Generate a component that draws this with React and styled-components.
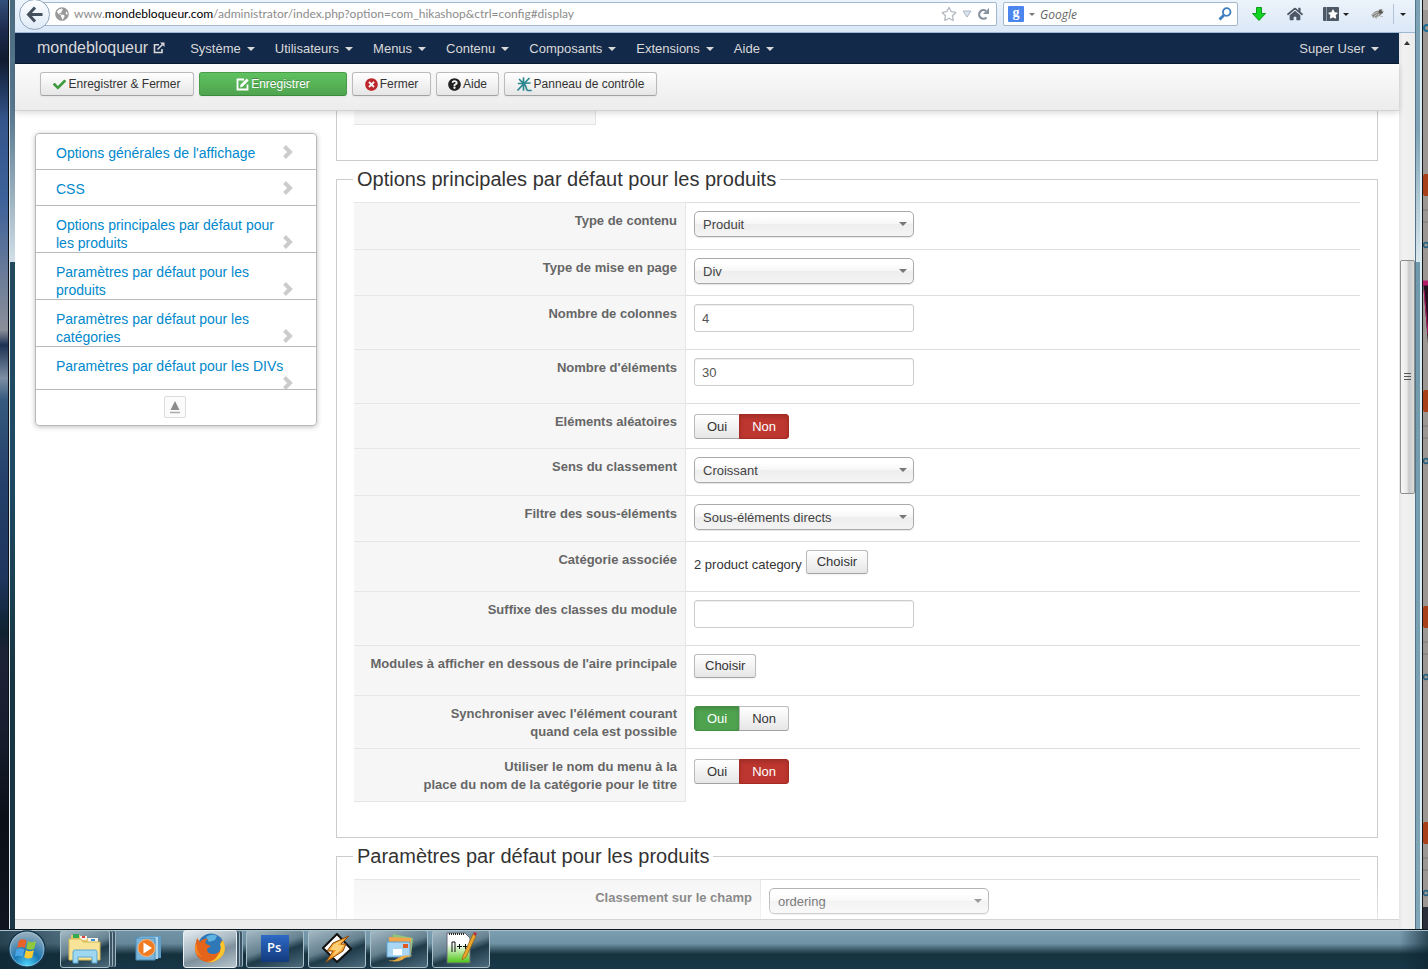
import React, { useState } from 'react';
import styled, { createGlobalStyle, css } from 'styled-components';
import { FaCheck, FaTimesCircle, FaQuestionCircle, FaHome, FaRegStar, FaStar, FaGlobeAmericas } from 'react-icons/fa';

const GlobalStyle = createGlobalStyle`
    * {
        box-sizing: border-box;
    }
    body {
        margin: 0;
        font-family: "Liberation Sans", Arial, sans-serif;
        font-size: 13px;
        line-height: 18px;
        color: #333;
        overflow: hidden;
    }
    button, input, select {
        font-family: inherit;
        font-size: 13px;
    }
    a {
        text-decoration: none;
    }
`;

/* ---------- desktop and window ---------- */

const Desktop = styled.div`
    display: flex;
    flex-direction: column;
    height: 100vh;
    background: #0f2430;
`;

const Screen = styled.div`
    display: flex;
    flex: 1;
    min-height: 0;
`;

const Wallpaper = styled.div`
    width: 8px;
    background: linear-gradient(#34507c 0, #1d2a4c 30px, #101b30 60px, #34558c 120px, #3d619a 200px, #8b8f98 330px, #1c3154 345px, #7d8fa3 378px, #35597f 400px, #24406b 480px, #1f355c 580px, #0e2230 632px, #1c2236 650px, #181d2e 730px, #0a0f18 820px, #10141e);
`;

const LeftFrame = styled.div`
    width: 7px;
    border-left: 1px solid #0a1218;
    background: linear-gradient(90deg, #dfe9ee 0 1px, transparent 1px),
        linear-gradient(#49697f 0, #5c7c92 120px, #d2dfe7 262px, #23495e 262px, #1f4a66 460px, #1a3f50 600px, #173442 680px, #1b3746);
`;

const RightFrame = styled.div`
    width: 8px;
    border-right: 1px solid #10181c;
    background: linear-gradient(90deg, #4f7586 0 1px, transparent 1px 5px, #dcebf1 5px 7px),
        linear-gradient(#7ba2b4 0, #7da4b6 130px, #dbe8ee 262px, #6f99ac 262px, #7fa6b7);
`;

const BackWindow = styled.div`
    width: 5px;
    overflow: hidden;
    background: #9c9793;
`;

const Browser = styled.div`
    display: flex;
    flex-direction: column;
    flex: 1;
    min-width: 0;
    background: white;
`;

/* ---------- browser bar ---------- */

const NavBar = styled.div`
    display: flex;
    align-items: center;
    height: 33px;
    padding: 0 9px 4px 4px;
    border-bottom: 1px solid #9db8d4;
    background: linear-gradient(#ecf3fb, #dbe8f7);
    font-family: "Open Sans", "Noto Sans", sans-serif;
    font-size: 12px;
`;

const BackButton = styled.button`
    display: flex;
    align-items: center;
    justify-content: center;
    flex: none;
    width: 31px;
    height: 31px;
    padding: 0;
    border: 1px solid #8fa6bd;
    border-radius: 50%;
    background: linear-gradient(#fdfeff, #dfeaf6);
    z-index: 1;
`;

const UrlBar = styled.div`
    display: flex;
    align-items: center;
    flex: 1;
    gap: 5px;
    height: 24px;
    margin-left: -8px;
    padding: 0 6px 0 12px;
    border: 1px solid #a3b8cc;
    border-radius: 2px;
    background: white;
    color: #8c8c8c;
`;

const Url = styled.div`
    flex: 1;
    font-family: Lato, "Open Sans", sans-serif;
    white-space: nowrap;
    strong {
        font-weight: 400;
        color: #000;
    }
`;

const SearchBar = styled(UrlBar)`
    flex: none;
    width: 235px;
    margin: 0 0 0 6px;
    padding: 0 5px 0 4px;
`;

const GoogleMark = styled.span`
    width: 16px;
    height: 16px;
    border-radius: 1px;
    background: #4a86ee;
    color: white;
    font: 700 14px/13px "Liberation Serif", serif;
    text-align: center;
`;

const SearchInput = styled.input`
    flex: 1;
    min-width: 0;
    padding: 0;
    border: none;
    outline: none;
    font-size: 12px;
    font-style: italic;
    background: none;
    &::placeholder {
        color: #666;
    }
`;

const BarIcon = styled.button`
    display: flex;
    align-items: center;
    gap: 4px;
    margin-left: ${(props) => props.$gap || 0}px;
    padding: 0;
    border: none;
    background: none;
    color: #4d5866;
`;

const BarSplit = styled.span`
    width: 1px;
    height: 20px;
    margin: 0 6px 0 7px;
    background: #b4c4d6;
`;

const Caret = styled.span`
    display: inline-block;
    border-top: 4px solid ${(props) => props.$color || '#d9d9d9'};
    border-left: 4px solid transparent;
    border-right: 4px solid transparent;
`;

const SmallCaret = styled(Caret)`
    border-width: 3px 3px 0;
`;

/* ---------- scroll bar ---------- */

const Viewport = styled.div`
    display: flex;
    flex: 1;
    min-height: 0;
`;

const ScrollTrack = styled.div`
    display: flex;
    flex-direction: column;
    align-items: center;
    width: 16px;
    padding-top: 8px;
    background: linear-gradient(90deg, #e6e6e6, #f1f1f1 4px, #ececec);
`;

const ScrollThumb = styled.div`
    display: flex;
    align-items: center;
    justify-content: center;
    width: 15px;
    height: 234px;
    margin-top: 215px;
    border: 1px solid #8f8f8f;
    border-radius: 2px;
    background: linear-gradient(90deg, #f7f7f7, #e9e9e9 45%, #c9c9cb 60%, #dcdcdc);
`;

/* ---------- admin page ---------- */

const Page = styled.div`
    display: flex;
    flex-direction: column;
    flex: 1;
    min-width: 0;
`;

const AdminBar = styled.nav`
    display: flex;
    align-items: center;
    height: 31px;
    padding: 0 10px 0 22px;
    border-bottom: 1px solid #0a1a33;
    background: #13294a;
`;

const Brand = styled.a`
    display: flex;
    align-items: center;
    gap: 5px;
    margin-right: 15px;
    color: #d9d9d9;
    font-size: 16px;
`;

const MenuLink = styled.a`
    display: flex;
    align-items: center;
    gap: 6px;
    padding: 1px 10px 0;
    color: #d9d9d9;
    &:last-child {
        margin-left: auto;
    }
`;

const Toolbar = styled.div`
    display: flex;
    gap: 5px;
    height: 47px;
    padding: 8px 25px;
    border-bottom: 1px solid #d2d2d2;
    background: linear-gradient(#fbfbfb, #ececec);
    box-shadow: 0 2px 6px rgba(0, 0, 0, 0.15);
    z-index: 1;
`;

const Button = styled.button`
    height: 24px;
    padding: 0 10px;
    border: 1px solid #bbb;
    border-bottom-color: #a2a2a2;
    border-radius: 3px;
    background: linear-gradient(#fff, #e6e6e6);
    box-shadow: 0 1px 2px rgba(0, 0, 0, 0.05);
    color: #333;
    line-height: 18px;
    cursor: pointer;
`;

const ToolButton = styled(Button)`
    display: flex;
    align-items: center;
    justify-content: center;
    gap: 2px;
    min-width: ${(props) => props.$width}px;
    padding: 0 8px;
    font-size: 12px;
    white-space: nowrap;
    ${(props) => props.$green && css`
        border-color: #4a9c4a #4a9c4a #3c8a3c;
        background: linear-gradient(#5fc15f, #4fa44f);
        color: white;
        text-shadow: 0 -1px 0 rgba(0, 0, 0, 0.25);
    `}
`;

const Content = styled.div`
    display: flex;
    align-items: flex-start;
    flex: 1;
    min-height: 0;
    gap: 19px;
    padding: 0 21px 0 20px;
    overflow: hidden;
    position: relative;
    &::after {
        content: "";
        position: absolute;
        left: 0;
        right: 0;
        bottom: 0;
        height: 40px;
        background: linear-gradient(rgba(255, 255, 255, 0), rgba(255, 255, 255, 0.5));
        pointer-events: none;
    }
`;

const StatusBar = styled.div`
    height: 10px;
    border-top: 1px solid #d4d4d4;
    background: #ececec;
`;

/* ---------- side menu ---------- */

const SideMenu = styled.ul`
    flex: none;
    width: 282px;
    margin: 22px 0 0;
    padding: 0;
    list-style: none;
    border: 1px solid #b9b9b9;
    border-radius: 4px;
    box-shadow: 0 1px 5px rgba(0, 0, 0, 0.25);
    font-size: 14px;
`;

const SideItem = styled.li`
    display: flow-root;
    min-height: 36px;
    max-height: ${(props) => (props.$short ? '43px' : 'none')};
    padding: 10px 22px 0 20px;
    border-bottom: 1px solid #b9b9b9;
    overflow: hidden;
    a {
        color: #08c;
    }
    svg {
        float: right;
        margin-top: 1px;
    }
`;

const SideTop = styled.li`
    display: flex;
    justify-content: center;
    padding: 6px 2px 7px 0;
`;

const TopButton = styled.button`
    display: flex;
    align-items: center;
    justify-content: center;
    width: 22px;
    height: 22px;
    padding: 0;
    border: 1px solid #ddd;
    border-radius: 2px;
    background: #fbfbfb;
`;

/* ---------- option sheets ---------- */

const Sheets = styled.div`
    flex: 1;
    min-width: 0;
`;

const Sheet = styled.fieldset`
    min-width: 0;
    margin: 0;
    padding: ${(props) => (props.$cut ? '0' : '5px')} 17px 35px;
    border: 1px solid #ccc;
    border-top-width: ${(props) => (props.$cut ? '0' : '1px')};
`;

const Legend = styled.legend`
    padding: 0 4px;
    margin-left: -1px;
    font-size: 20px;
    line-height: 36px;
`;

const CutCell = styled.div`
    width: 242px;
    height: 14px;
    border: solid #e4e4e4;
    border-width: 0 1px 1px 0;
    background: #f6f6f6;
`;

const OptionTable = styled.table`
    width: 100%;
    border-collapse: separate;
    border-spacing: 0;
`;

const OptionRow = styled.tr`
    height: ${(props) => props.$height}px;
`;

const KeyCell = styled.th`
    width: ${(props) => props.$width}px;
    padding: 9px 8px 0;
    border-top: 1px solid #e6e6e6;
    border-right: 1px solid #e6e6e6;
    background: #f6f6f6;
    color: #666;
    font-weight: bold;
    text-align: right;
    vertical-align: top;
    white-space: pre-line;
    tr:last-child > & {
        border-bottom: 1px solid #e6e6e6;
    }
`;

const ValueCell = styled.td`
    padding: 8px 8px 0;
    border-top: 1px solid #ddd;
    vertical-align: top;
`;

const SelectWrap = styled.div`
    position: relative;
    width: 220px;
    ${Caret} {
        position: absolute;
        top: 11px;
        right: 7px;
        pointer-events: none;
    }
`;

const Select = styled.select`
    display: block;
    width: 100%;
    height: 26px;
    padding: 0 24px 0 8px;
    border: 1px solid #aaa;
    border-radius: 5px;
    appearance: none;
    background: linear-gradient(#fff 20%, #f6f6f6 50%, #eee 52%, #f4f4f4);
    box-shadow: 0 1px 1px rgba(0, 0, 0, 0.1);
    color: #444;
`;

const TextInput = styled.input`
    display: block;
    width: 220px;
    height: 28px;
    padding: 4px 7px;
    border: 1px solid #ccc;
    border-radius: 3px;
    box-shadow: inset 0 1px 1px rgba(0, 0, 0, 0.075);
    color: #555;
`;

const Picker = styled.div`
    display: flex;
    align-items: flex-end;
    gap: 4px;
`;

const Switch = styled.div`
    display: flex;
    padding-top: 2px;
`;

const SwitchLabel = styled.label`
    height: 25px;
    padding: 3px 12px 0;
    border: 1px solid #bbb;
    border-bottom-color: #a2a2a2;
    background: linear-gradient(#fff, #e6e6e6);
    cursor: pointer;
    &:first-child {
        border-radius: 3px 0 0 3px;
    }
    &:last-child {
        margin-left: -1px;
        border-radius: 0 3px 3px 0;
    }
    ${(props) => props.$on && css`
        border-color: ${props.$on === 'oui' ? '#408e40' : '#a52a24'};
        background: ${props.$on === 'oui' ? '#4fa34f' : '#bd362f'};
        box-shadow: inset 0 2px 4px rgba(0, 0, 0, 0.15);
        color: white;
    `}
    input {
        position: absolute;
        opacity: 0;
        width: 0;
        height: 0;
        margin: 0;
    }
`;

/* ---------- task bar ---------- */

const TaskBar = styled.div`
    display: flex;
    align-items: center;
    height: 40px;
    padding: 0 0 1px 7px;
    border-top: 1px solid #0a161d;
    box-shadow: inset 0 1px 0 #a9c0cc;
    background: linear-gradient(90deg, rgba(14, 38, 52, 0.75) 0, rgba(14, 38, 52, 0.1) 120px, transparent 400px, transparent 98%, rgba(14, 38, 52, 0.7)),
        linear-gradient(#7c9fb1, #6f92a4 35%, #16323f 62%, #18384a);
`;

const StartButton = styled.button`
    width: 40px;
    height: 38px;
    margin-right: 13px;
    padding: 0;
    border: none;
    background: none;
`;

const TaskButton = styled.button`
    display: flex;
    align-items: center;
    justify-content: center;
    width: ${(props) => props.$width || 58}px;
    height: 38px;
    margin-right: 4px;
    padding: 0 0 2px;
    border: 1px solid #a9bfc9;
    border-radius: 3px;
    background: linear-gradient(160deg, #a5bac5, #64808f 45%, #1f3a49 60%, #4c6c7d);
    ${(props) => props.$active && css`
        border-color: #e9f0f3;
        background: linear-gradient(160deg, #e3ebef, #a5b5bf 45%, #7e919d 60%, #b7c5cc);
    `}
    ${(props) => props.$plain && css`
        border-color: transparent;
        background: none;
    `}
    ${(props) => props.$stack && css`
        margin-right: 9px;
        box-shadow: 3px 0 0 -1px #3b5566, 4px 0 0 -1px #9db4c0, 6px 0 0 -1px #3b5566, 7px 0 0 -1px #9db4c0;
    `}
`;

/* ---------- drawings ---------- */

const BackArrow = () => (
    <svg width="17" height="17" viewBox="0 0 17 17" fill="none" stroke="#45505d" strokeWidth="3">
        <path d="M9 1.5 2.5 8.5 9 15.5M3 8.5h13.500" />
    </svg>
);

const Reload = () => (
    <svg width="13" height="13" viewBox="0 0 13 13">
        <path d="M9.500 9.500A4.300 4.300 0 1 1 9 3" fill="none" stroke="#8792a0" strokeWidth="2.200" />
        <path d="M12 0v6H6z" fill="#8792a0" />
    </svg>
);

const UrlDrop = () => (
    <svg width="10" height="8" viewBox="0 0 10 8">
        <path d="M1 1h8L5 7z" fill="#dbe3ec" stroke="#aab6c5" />
    </svg>
);

const Magnifier = () => (
    <svg width="14" height="14" viewBox="0 0 14 14" fill="none" stroke="#3c7dbd">
        <circle cx="8.700" cy="5" r="3.800" strokeWidth="1.800" />
        <path d="M6 8 1.500 12.500" strokeWidth="2.800" />
    </svg>
);

const DownArrow = () => (
    <svg width="14" height="14" viewBox="0 0 14 14">
        <path d="M4.500.5h5v6h4L7 13.500.5 6.500h4z" fill="#12d422" stroke="#0f9a1b" />
    </svg>
);

const Bug = () => (
    <svg width="17" height="14" viewBox="0 0 17 14">
        <ellipse cx="8" cy="7" rx="5.500" ry="3" fill="#8d8c88" transform="rotate(-25 8 7)" />
        <path d="M2 8 9 5M4 11l4-4M7 12l3-5M11 9l3 1" stroke="#bdbdbb" />
        <circle cx="12" cy="4.500" r="2.300" fill="#5b5853" />
        <circle cx="13.500" cy="3.500" r="1" fill="#ddd" />
    </svg>
);

const ExternalLink = () => (
    <svg width="12" height="12" viewBox="0 0 12 12" fill="none" stroke="#d9d9d9" strokeWidth="1.600">
        <path d="M6 2.800H1.500V10.500H9V7M4.500 7.500 9.500 2.500" />
        <path d="M7 .5h4.500V5z" fill="#d9d9d9" stroke="none" />
    </svg>
);

const EditSquare = () => (
    <svg width="13" height="13" viewBox="0 0 13 13" fill="none" stroke="white" strokeWidth="1.800">
        <path d="M8 1.500H1.500v10h10V6.500" />
        <path d="M4 9.500 4.700 6.500l6-6 2 2-6 6z" fill="white" stroke="none" />
    </svg>
);

const HikaStar = () => (
    <svg width="15" height="15" viewBox="0 0 15 15" fill="none" stroke="#2b8790" strokeWidth="1.700" strokeLinecap="round">
        <path d="M6.500 1v12M1.500 6.500 13 6M2.500 2.500l3 3M12 1.500 8 5.500M6 7.500 1 13M7.500 7.500C10 9 8.500 13.500 11 13.500h3" />
    </svg>
);

const Chevron = () => (
    <svg width="12" height="14" viewBox="0 0 12 14" fill="none" stroke="#ccc" strokeWidth="4">
        <path d="M2.500 1.500 8 7 2.500 12.500" />
    </svg>
);

const ToTop = () => (
    <svg width="10" height="13" viewBox="0 0 10 13">
        <path d="M5 0 9.500 9h-9z" fill="#8c8c8c" />
        <path d="M0 11.500h10" stroke="#aaa" strokeWidth="1.500" />
    </svg>
);

const BehindStrip = () => (
    <svg width="5" height="929" viewBox="0 0 5 929">
        {[174, 390, 606, 822].map((y) => (
            <g key={y}>
                <path d={`M5 ${y}H2Q0 ${y} 0 ${y + 3}V${y + 19}Q0 ${y + 22} 2 ${y + 22}H5z`} fill="#a8401a" />
                <path d={`M0 ${y + 36}h5M0 ${y + 48}h5`} stroke="#7f7b78" />
                <circle cx="3" cy={y + 71} r="2.500" fill="none" stroke="#1e5f80" strokeWidth="1.500" />
            </g>
        ))}
        <path d="M0 0h5v10H0z" fill="#b5b0ab" />
        <circle cx="4" cy="28" r="3" fill="none" stroke="#1e6d95" strokeWidth="2" />
        <path d="M0 281h5v63z" fill="#26101e" />
        <path d="M0 281h5v4H0zM1 290l4 44" fill="#b41b69" stroke="#b41b69" />
        <path d="M0 907h5v22H0z" fill="#2a2f3a" />
    </svg>
);

const StartOrb = () => (
    <svg width="40" height="38" viewBox="0 0 40 40">
        <defs>
            <radialGradient id="orb" cx="50%" cy="95%" r="85%">
                <stop offset="0" stopColor="#4fd6fb" />
                <stop offset=".45" stopColor="#1b77b3" />
                <stop offset="1" stopColor="#8fa9bb" />
            </radialGradient>
        </defs>
        <circle cx="20" cy="20" r="19" fill="url(#orb)" stroke="#16364c" strokeWidth="1.500" />
        <circle cx="20" cy="20" r="17.800" fill="none" stroke="#b5dcee" strokeOpacity=".6" />
        <path d="M11.500 11q4-2.500 8 0l-1.800 8q-4-2.300-8.200 0z" fill="#e8622a" />
        <path d="M21 11.500q4 2.500 8.500.2l-1.800 8q-4.500 2.300-8.500-.2z" fill="#8fc740" />
        <path d="M9 20.500q4-2.300 8.200 0l-1.800 7.700q-4-2.200-8.200 0z" fill="#4aa5e8" />
        <path d="M18.800 21q4 2.500 8.500.2l-1.800 7.700q-4.300 2.300-8.400-.2z" fill="#fccb35" />
    </svg>
);

const FolderIcon = () => (
    <svg width="34" height="32" viewBox="0 0 34 32">
        <path d="M3 3h9l2 3h16v22H3z" fill="#e6c968" />
        <path d="M5 2h6v4H5z" fill="#35a853" />
        <path d="M12 4h7v4h-7z" fill="#f6f3e6" />
        <path d="M14 4h3v2h-3z" fill="#d44" />
        <path d="M20 6h10v4H20z" fill="#f6f3e6" />
        <path d="M23 7h4v2h-4z" fill="#3d93d8" />
        <path d="M1 7h12l2 3h17v18H1z" fill="#f7e498" stroke="#d8b952" />
        <path d="M5 31V20q0-2 2-2h20q2 0 2 2v11h-5v-6H10v6z" fill="#9fd6f0" stroke="#5ba8d2" />
    </svg>
);

const PlayerIcon = () => (
    <svg width="28" height="28" viewBox="0 0 28 28">
        <path d="M6 2h20v22H6z" fill="#5d9fca" />
        <path d="M4 3h19v22H4z" fill="#a9d4ec" />
        <path d="M1 4h19v22H1z" fill="#7ab6db" stroke="#4d8bb5" />
        <circle cx="11.500" cy="14" r="8.500" fill="#f07a22" stroke="#fbb377" />
        <path d="M8.500 8.500v11l8.500-5.500z" fill="white" />
    </svg>
);

const FirefoxIcon = () => (
    <svg width="32" height="32" viewBox="0 0 32 32">
        <circle cx="17" cy="14.500" r="13" fill="#2e78b8" />
        <path d="M12 5q6-4 11-1l-2 4-6 2z" fill="#5fb4e0" />
        <path d="M29 9q4 11-3 17-8 7-17 3-9-5-8-15l2-8 3 4q3-4 8-3-4 2-2 5l5 2-4 3q0 5 6 5t8-6q1-5-1-8l4 3z" fill="#e4641b" />
        <path d="M29 8q5 12-3 18-5 5-13 4 8-1 11-7 4-5 2-11z" fill="#fbc52e" />
        <path d="M3 12q-1 8 5 13-8-3-7-11z" fill="#f58b26" />
    </svg>
);

const PhotoshopIcon = () => (
    <svg width="28" height="27" viewBox="0 0 28 27">
        <defs>
            <linearGradient id="ps" x1="0" y1="0" x2="0" y2="1">
                <stop offset="0" stopColor="#2e6ac6" />
                <stop offset="1" stopColor="#123a7d" />
            </linearGradient>
        </defs>
        <path d="M0 0h28v27H0z" fill="url(#ps)" />
        <text x="6" y="17" fill="white" fontFamily="Open Sans" fontWeight="600" fontSize="13">Ps</text>
    </svg>
);

const WinampIcon = () => (
    <svg width="30" height="30" viewBox="0 0 30 30">
        <path d="M15 1 29 16 15 29 1 15z" fill="white" stroke="#111" strokeWidth="2" />
        <path d="M27 3 11 10 5 18h6l-7 11 17-11 3-7h-5z" fill="#f6a02c" stroke="#8d4a0b" />
        <path d="M22 6 12 11l-4 6h6l-4 7 9-7 3-5h-6z" fill="#fdd077" />
    </svg>
);

const MailIcon = () => (
    <svg width="32" height="30" viewBox="0 0 32 30">
        <path d="m10 1 20 4-2 18-20-4z" fill="#8ec779" />
        <path d="m6 4 22 1v17H6z" fill="#f2a54a" />
        <path d="M4 9h23v15H4z" fill="#a8d6f3" stroke="#5c9fce" />
        <path d="M10 16h9v6h-9z" fill="white" />
        <path d="M20 11h5v4h-5z" fill="#df5a25" />
        <path d="M1 25q8 5 14 0 7-4 15-2-6 0-11 4-9 4-18-2z" fill="#e9a83f" />
    </svg>
);

const NotepadIcon = () => (
    <svg width="32" height="34" viewBox="0 0 32 34">
        <defs>
            <linearGradient id="npp" x1="0" y1="0" x2="0" y2="1">
                <stop offset=".35" stopColor="#fff" />
                <stop offset="1" stopColor="#4cc514" />
            </linearGradient>
        </defs>
        <path d="M2 2h18l5 5v25H2z" fill="url(#npp)" stroke="#667" />
        <path d="M4 3h16" stroke="#222" strokeDasharray="1 1" strokeWidth="2" />
        <path d="M7 21V11h3v10M12 15.500h5M14.500 13v5M18 15.500h5M20.500 13v5" fill="none" stroke="#111" />
        <path d="M28 3 18 25l-1 4 4-3L31 5z" fill="#eba72d" stroke="#9a6412" strokeWidth=".8" />
        <path d="m28 3 1-2 3 1-1 3z" fill="#b5374c" />
    </svg>
);

/* ---------- data ---------- */

const menus = ['Système', 'Utilisateurs', 'Menus', 'Contenu', 'Composants', 'Extensions', 'Aide'];

const sideLinks = [
    "Options générales de l'affichage",
    'CSS',
    'Options principales par défaut pour les produits',
    'Paramètres par défaut pour les produits',
    'Paramètres par défaut pour les catégories',
    'Paramètres par défaut pour les DIVs',
];

const productOptions = [
    { id: 'content_type', label: 'Type de contenu', type: 'select', value: 'Produit', height: 47 },
    { id: 'layout_type', label: 'Type de mise en page', type: 'select', value: 'Div', height: 46 },
    { id: 'columns', label: 'Nombre de colonnes', type: 'text', value: '4', height: 54 },
    { id: 'limit', label: "Nombre d'éléments", type: 'text', value: '30', height: 54 },
    { id: 'random', label: 'Eléments aléatoires', type: 'switch', value: 'non', height: 45 },
    { id: 'order_dir', label: 'Sens du classement', type: 'select', value: 'Croissant', height: 47 },
    { id: 'filter_type', label: 'Filtre des sous-éléments', type: 'select', value: 'Sous-éléments directs', height: 46 },
    { id: 'category', label: 'Catégorie associée', type: 'picker', value: '2 product category', height: 50 },
    { id: 'suffix', label: 'Suffixe des classes du module', type: 'text', value: '', height: 54 },
    { id: 'modules', label: "Modules à afficher en dessous de l'aire principale", type: 'picker', value: '', height: 50 },
    { id: 'synchro', label: "Synchroniser avec l'élément courant\nquand cela est possible", type: 'switch', value: 'oui', height: 53 },
    { id: 'menu_name', label: 'Utiliser le nom du menu à la\nplace du nom de la catégorie pour le titre', type: 'switch', value: 'non', height: 54 },
];

const defaultOptions = [
    { id: 'product_order', label: 'Classement sur le champ', type: 'select', value: 'ordering', height: 47 },
];

/* ---------- parts ---------- */

const YesNo = ({ id, value }) => {
    const [current, setCurrent] = useState(value);
    return (
        <Switch role="radiogroup" aria-labelledby={`${id}-label`}>
            {['oui', 'non'].map((choice) => (
                <SwitchLabel key={choice} $on={current === choice && choice}>
                    <input
                        type="radio"
                        name={id}
                        id={choice === 'oui' ? id : undefined}
                        checked={current === choice}
                        onChange={() => setCurrent(choice)}
                    />
                    {choice === 'oui' ? 'Oui' : 'Non'}
                </SwitchLabel>
            ))}
        </Switch>
    );
};

const Field = ({ option }) => {
    const { id, type, value } = option;
    if (type === 'select') {
        return (
            <SelectWrap>
                <Select id={id} defaultValue={value}>
                    <option>{value}</option>
                </Select>
                <Caret $color="#777" />
            </SelectWrap>
        );
    }
    if (type === 'text') {
        return <TextInput id={id} type="text" defaultValue={value} />;
    }
    if (type === 'switch') {
        return <YesNo id={id} value={value} />;
    }
    return (
        <Picker>
            {value && <span>{value}</span>}
            <Button id={id}>Choisir</Button>
        </Picker>
    );
};

const Options = ({ options, keyWidth }) => (
    <OptionTable>
        <tbody>
            {options.map((option) => (
                <OptionRow key={option.id} $height={option.height}>
                    <KeyCell scope="row" $width={keyWidth}>
                        <label id={`${option.id}-label`} htmlFor={option.id}>{option.label}</label>
                    </KeyCell>
                    <ValueCell><Field option={option} /></ValueCell>
                </OptionRow>
            ))}
        </tbody>
    </OptionTable>
);

const App = () => {
    return (
        <Desktop>
            <GlobalStyle />
            <Screen>
                <Wallpaper />
                <LeftFrame />
                <Browser>
                    <NavBar>
                        <BackButton aria-label="Page précédente"><BackArrow /></BackButton>
                        <UrlBar>
                            <FaGlobeAmericas size={14} color="#999" />
                            <Url>www.<strong>mondebloqueur.com</strong>/administrator/index.php?option=com_hikashop&amp;ctrl=config#display</Url>
                            <FaRegStar size={16} color="#b5bbc2" />
                            <UrlDrop />
                            <Reload />
                        </UrlBar>
                        <SearchBar>
                            <GoogleMark>g</GoogleMark>
                            <SmallCaret $color="#777" />
                            <SearchInput placeholder="Google" aria-label="Google" />
                            <Magnifier />
                        </SearchBar>
                        <BarIcon $gap={14} aria-label="Téléchargements"><DownArrow /></BarIcon>
                        <BarIcon $gap={21} aria-label="Accueil"><FaHome size={16} /></BarIcon>
                        <BarIcon $gap={20} aria-label="Marque-pages">
                            <svg width="16" height="14" viewBox="0 0 16 14">
                                <rect width="16" height="14" rx="1" fill="#4d5866" />
                                <path d="M3.500 0v14" stroke="#8b96a3" />
                                <FaStar x="5" y="2" size={10} color="white" />
                            </svg>
                            <SmallCaret $color="#222" />
                        </BarIcon>
                        <BarIcon $gap={20} aria-label="Firebug"><Bug /></BarIcon>
                        <BarSplit />
                        <BarIcon aria-label="Plus"><SmallCaret $color="#222" /></BarIcon>
                    </NavBar>
                    <Viewport>
                        <Page>
                            <AdminBar>
                                <Brand href="#site">mondebloqueur <ExternalLink /></Brand>
                                {menus.map((menu) => (
                                    <MenuLink key={menu} href="#menu">{menu} <Caret /></MenuLink>
                                ))}
                                <MenuLink href="#user">Super User <Caret /></MenuLink>
                            </AdminBar>
                            <Toolbar>
                                <ToolButton $width={154}><FaCheck size={13} color="#3f9a3f" />Enregistrer &amp; Fermer</ToolButton>
                                <ToolButton $width={148} $green><EditSquare />Enregistrer</ToolButton>
                                <ToolButton $width={79}><FaTimesCircle size={13} color="#bd262a" />Fermer</ToolButton>
                                <ToolButton $width={63}><FaQuestionCircle size={13} color="#222" />Aide</ToolButton>
                                <ToolButton $width={153}><HikaStar />Panneau de contrôle</ToolButton>
                            </Toolbar>
                            <Content>
                                <SideMenu>
                                    {sideLinks.map((link, i) => (
                                        <SideItem key={link} $short={i === sideLinks.length - 1}>
                                            <a href="#options">{link}<Chevron /></a>
                                        </SideItem>
                                    ))}
                                    <SideTop>
                                        <TopButton aria-label="Haut de page"><ToTop /></TopButton>
                                    </SideTop>
                                </SideMenu>
                                <Sheets>
                                    <Sheet $cut>
                                        <CutCell />
                                    </Sheet>
                                    <Sheet>
                                        <Legend>Options principales par défaut pour les produits</Legend>
                                        <Options options={productOptions} keyWidth={332} />
                                    </Sheet>
                                    <Sheet>
                                        <Legend>Paramètres par défaut pour les produits</Legend>
                                        <Options options={defaultOptions} keyWidth={407} />
                                    </Sheet>
                                </Sheets>
                            </Content>
                            <StatusBar />
                        </Page>
                        <ScrollTrack>
                            <svg width="6" height="4" viewBox="0 0 6 4"><path d="M0 4 3 0l3 4z" fill="#333" /></svg>
                            <ScrollThumb>
                                <svg width="7" height="8" viewBox="0 0 7 8" stroke="#555"><path d="M0 .5h7M0 3.500h7M0 6.500h7" /></svg>
                            </ScrollThumb>
                        </ScrollTrack>
                    </Viewport>
                </Browser>
                <RightFrame />
                <BackWindow><BehindStrip /></BackWindow>
            </Screen>
            <TaskBar>
                <StartButton aria-label="Démarrer"><StartOrb /></StartButton>
                <TaskButton $width={50} $stack aria-label="Explorateur"><FolderIcon /></TaskButton>
                <TaskButton $width={60} $plain aria-label="Lecteur"><PlayerIcon /></TaskButton>
                <TaskButton $width={54} $stack $active aria-label="Firefox"><FirefoxIcon /></TaskButton>
                <TaskButton aria-label="Photoshop"><PhotoshopIcon /></TaskButton>
                <TaskButton aria-label="Winamp"><WinampIcon /></TaskButton>
                <TaskButton aria-label="Messagerie"><MailIcon /></TaskButton>
                <TaskButton aria-label="Notepad++"><NotepadIcon /></TaskButton>
            </TaskBar>
        </Desktop>
    );
};

export default App;
